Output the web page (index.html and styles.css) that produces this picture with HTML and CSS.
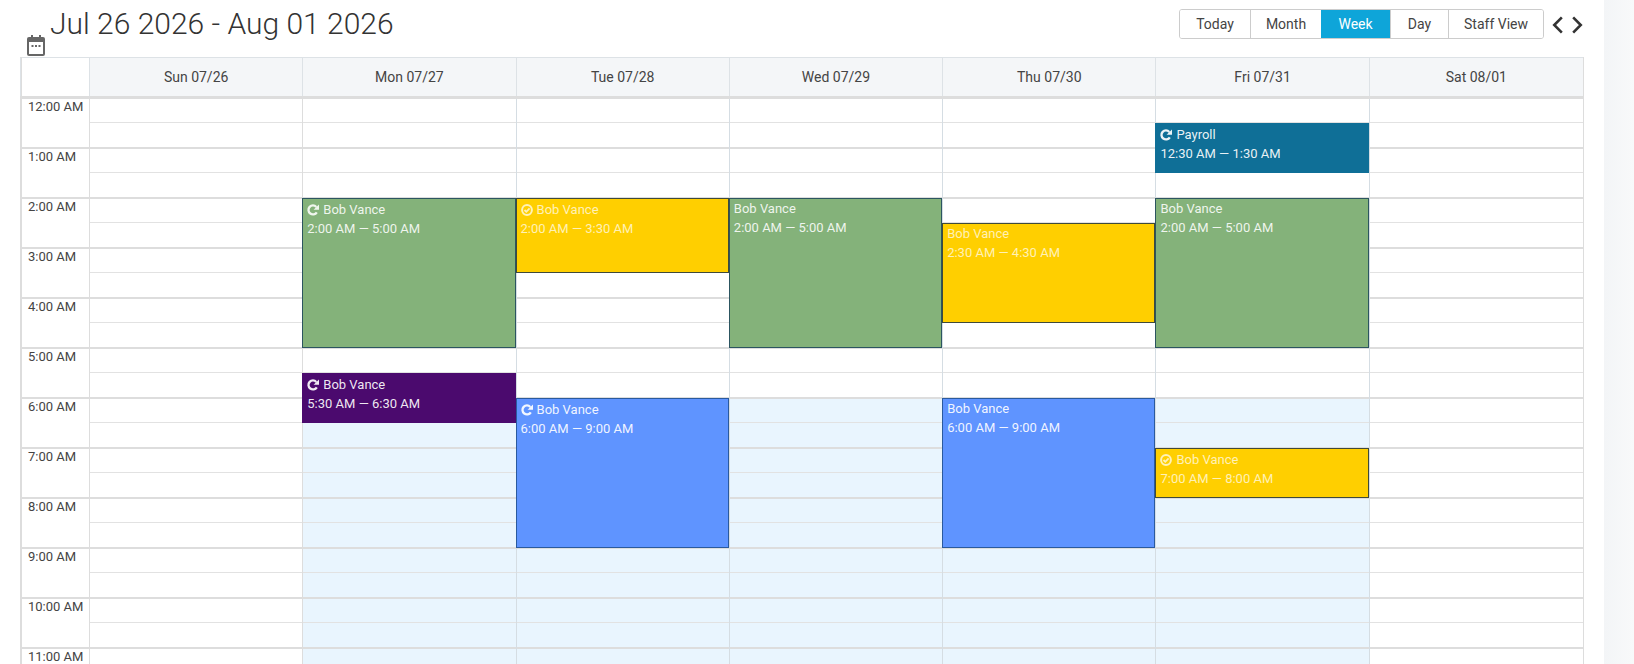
FILE: index.html
```html
<!DOCTYPE html>
<html lang="en">
<head>
    <meta charset="UTF-8">
    <title>Schedule</title>
    <link rel="stylesheet" href="styles.css">
</head>
<body>
    <svg class="defs" width="0" height="0">
        <symbol id="i-repeat" viewBox="0 0 12 12">
            <path d="M9.800 8.300A4.500 4.500 0 1 1 9.300 2.900" fill="none" stroke="currentColor" stroke-width="2.300"/>
            <path d="M12 .4V5.800H6.600z" fill="currentColor"/>
        </symbol>
        <symbol id="i-done" viewBox="0 0 12 12">
            <circle cx="6" cy="6" r="4.900" fill="none" stroke="currentColor" stroke-width="2"/>
            <path d="M3.500 6 5.300 7.800 8.600 4.400" fill="none" stroke="currentColor" stroke-width="1.800"/>
        </symbol>
    </svg>

    <div class="page">
        <main class="main">
            <div class="toolbar">
                <div class="range">
                    <svg class="range-icon" viewBox="0 0 18 21">
                        <path d="M4 0h2v3H4zM12 0h2v3h-2z" fill="#666"/>
                        <rect y="2" width="18" height="19" rx="2" fill="#666"/>
                        <rect x="2" y="7" width="14" height="12" fill="#fff"/>
                        <path d="M4.500 10h2v2h-2zM8 10h2v2H8zM11.500 10h2v2h-2z" fill="#666"/>
                    </svg>
                    <h1>Jul 26 2026 - Aug 01 2026</h1>
                </div>
                <div class="views">
                    <div class="view-group">
                        <button class="w-today">Today</button>
                        <button class="w-month">Month</button>
                        <button class="w-week active">Week</button>
                        <button class="w-day">Day</button>
                        <button class="w-staff">Staff View</button>
                    </div>
                    <svg class="arrow" viewBox="0 0 12 18"><path d="M10 2 3 9l7 7" fill="none" stroke="#333" stroke-width="2.400"/></svg>
                    <svg class="arrow" viewBox="0 0 12 18"><path d="M2 2l7 7-7 7" fill="none" stroke="#333" stroke-width="2.400"/></svg>
                </div>
            </div>

            <div class="calendar">
                <div class="head">
                    <div class="head-axis"></div>
                    <div class="head-day">Sun 07/26</div>
                    <div class="head-day">Mon 07/27</div>
                    <div class="head-day">Tue 07/28</div>
                    <div class="head-day">Wed 07/29</div>
                    <div class="head-day">Thu 07/30</div>
                    <div class="head-day">Fri 07/31</div>
                    <div class="head-day">Sat 08/01</div>
                </div>
                <div class="body">
                    <div class="axis">
                        <div class="hour">12:00 AM</div>
                        <div class="hour">1:00 AM</div>
                        <div class="hour">2:00 AM</div>
                        <div class="hour">3:00 AM</div>
                        <div class="hour">4:00 AM</div>
                        <div class="hour">5:00 AM</div>
                        <div class="hour">6:00 AM</div>
                        <div class="hour">7:00 AM</div>
                        <div class="hour">8:00 AM</div>
                        <div class="hour">9:00 AM</div>
                        <div class="hour">10:00 AM</div>
                        <div class="hour">11:00 AM</div>
                    </div>
                    <div class="day"></div>
                    <div class="day open">
                        <div class="event green from-2 len-3">
                            <div class="event-title has-icon"><svg class="event-icon"><use href="#i-repeat"/></svg>Bob Vance</div>
                            <div>2:00 AM — 5:00 AM</div>
                        </div>
                        <div class="event purple from-530 len-1">
                            <div class="event-title has-icon"><svg class="event-icon"><use href="#i-repeat"/></svg>Bob Vance</div>
                            <div>5:30 AM — 6:30 AM</div>
                        </div>
                    </div>
                    <div class="day open">
                        <div class="event yellow from-2 len-1h">
                            <div class="event-title has-icon"><svg class="event-icon"><use href="#i-done"/></svg>Bob Vance</div>
                            <div>2:00 AM — 3:30 AM</div>
                        </div>
                        <div class="event blue from-6 len-3">
                            <div class="event-title has-icon"><svg class="event-icon"><use href="#i-repeat"/></svg>Bob Vance</div>
                            <div>6:00 AM — 9:00 AM</div>
                        </div>
                    </div>
                    <div class="day open">
                        <div class="event green from-2 len-3">
                            <div class="event-title">Bob Vance</div>
                            <div>2:00 AM — 5:00 AM</div>
                        </div>
                    </div>
                    <div class="day open">
                        <div class="event yellow from-230 len-2">
                            <div class="event-title">Bob Vance</div>
                            <div>2:30 AM — 4:30 AM</div>
                        </div>
                        <div class="event blue from-6 len-3">
                            <div class="event-title">Bob Vance</div>
                            <div>6:00 AM — 9:00 AM</div>
                        </div>
                    </div>
                    <div class="day open">
                        <div class="event teal from-030 len-1">
                            <div class="event-title has-icon"><svg class="event-icon"><use href="#i-repeat"/></svg>Payroll</div>
                            <div>12:30 AM — 1:30 AM</div>
                        </div>
                        <div class="event green from-2 len-3">
                            <div class="event-title">Bob Vance</div>
                            <div>2:00 AM — 5:00 AM</div>
                        </div>
                        <div class="event yellow from-7 len-1">
                            <div class="event-title has-icon"><svg class="event-icon"><use href="#i-done"/></svg>Bob Vance</div>
                            <div>7:00 AM — 8:00 AM</div>
                        </div>
                    </div>
                    <div class="day"></div>
                </div>
            </div>
        </main>
        <div class="strip"></div>
    </div>
</body>
</html>
```

FILE: styles.css
```css
html{
    box-sizing: border-box;
    font-family: 'Roboto', sans-serif;
    font-size: 14px;
}

*,
*:after,
*:before{
    box-sizing: inherit;
}

body{
    margin: 0;
    height: 664px;
    overflow: hidden;
    background-color: #fff;
    color: #333;
}

.defs{
    position: absolute;
}

.page{
    display: flex;
    height: 100%;
}

.main{
    flex: 1;
    min-width: 0;
    padding: 0 20px;
}

.strip{
    width: 30px;
    background: linear-gradient(to right, #f3f5f7, #f8f9fa);
}

/* toolbar */
.toolbar{
    display: flex;
    justify-content: space-between;
    height: 57px;
}

.range{
    display: flex;
    align-items: flex-start;
    padding-left: 7px;
}

.range-icon{
    width: 18px;
    height: 21px;
    margin-top: 35px;
}

.range h1{
    margin: 4px 0 0 5px;
    font-size: 30px;
    font-weight: 300;
    line-height: 40px;
    color: #333;
}

.views{
    display: flex;
    align-items: flex-start;
    padding-top: 9px;
}

.view-group{
    display: flex;
    height: 30px;
    border: 1px solid #ccc;
    border-radius: 3px;
    overflow: hidden;
}

.view-group button{
    padding: 0;
    border: 0;
    border-left: 1px solid #ccc;
    background: #fff;
    font-family: inherit;
    font-size: 14px;
    color: #444;
}

.view-group button:first-child{
    border-left: 0;
}

.view-group .active{
    border-left: 0;
    background-color: #0ea5d9;
    color: #fff;
}

.w-today{ width: 70px; }
.w-month{ width: 71px; }
.w-week{ width: 69px; }
.w-day{ width: 58px; }
.w-staff{ width: 95px; }

.arrow{
    width: 13px;
    height: 20px;
    margin: 6px 0 0 7px;
}

/* calendar */
.calendar{
    border-left: 2px solid #ddd;
    border-right: 1px solid #ddd;
}

.head{
    display: grid;
    grid-template-columns: 68px repeat(7, 1fr);
    height: 42px;
    border-top: 1px solid #dde2e6;
    border-bottom: 3px solid #ddd;
}

.head-axis{
    border-right: 1px solid #dde2e6;
    margin-left: -2px;
    border-left: 1px solid #dde2e6;
}

.head-day{
    display: flex;
    align-items: center;
    justify-content: center;
    background-color: #f4f6f8;
    border-right: 1px solid #dde2e6;
    font-size: 14px;
    color: #444;
}

.head-day:last-child{
    border-right: 0;
}

.body{
    display: grid;
    grid-template-columns: 68px repeat(7, 1fr);
    height: 565px;
    overflow: hidden;
}

.hour{
    height: 50px;
    padding: 1px 0 0 6px;
    border-bottom: 2px solid #ddd;
    font-size: 13px;
    line-height: 14px;
    color: #444;
    white-space: nowrap;
}

.axis{
    border-right: 1px solid #ddd;
}

.day{
    position: relative;
    border-right: 1px solid #ddd;
    background-image:
        repeating-linear-gradient(to bottom,
            transparent 0, transparent 23px,
            #e2e2e2 23px, #e2e2e2 24px,
            transparent 24px, transparent 48px,
            #ddd 48px, #ddd 50px);
}

.day:last-child{
    border-right: 0;
}

.day.open{
    background-image:
        repeating-linear-gradient(to bottom,
            transparent 0, transparent 23px,
            #e2e2e2 23px, #e2e2e2 24px,
            transparent 24px, transparent 48px,
            #ddd 48px, #ddd 50px),
        linear-gradient(to bottom, transparent 299px, #e9f5fe 299px);
    border-right-color: #d5dde3;
}

/* events */
.event{
    position: absolute;
    left: -1px;
    right: 0;
    padding: 0 4px;
    border: 1px solid;
    font-size: 13px;
    line-height: 19px;
    overflow: hidden;
}

.event-title{
    display: flex;
    align-items: center;
}

.has-icon{
    margin-top: 1px;
}

.event-icon{
    width: 12px;
    height: 12px;
    margin-right: 4px;
}

.from-030{ top: 24px; }
.from-2{ top: 99px; }
.from-230{ top: 124px; }
.from-530{ top: 274px; }
.from-6{ top: 299px; }
.from-7{ top: 349px; }

.len-1{ height: 50px; }
.len-1h{ height: 75px; }
.len-2{ height: 100px; }
.len-3{ height: 150px; }

.green{
    background-color: #84b27a;
    border-color: #2c5560;
    color: rgba(255, 255, 255, .88);
}

.yellow{
    background-color: #ffcf00;
    border-color: #3f4a3a;
    color: rgba(255, 255, 255, .72);
}

.blue{
    background-color: #5f94ff;
    border-color: #2a5a9e;
    color: rgba(255, 255, 255, .92);
}

.purple{
    background-color: #4b0a6e;
    border-color: #4b0a6e;
    color: rgba(255, 255, 255, .92);
}

.teal{
    background-color: #0f6f97;
    border-color: #0f6f97;
    color: rgba(255, 255, 255, .92);
}
```
